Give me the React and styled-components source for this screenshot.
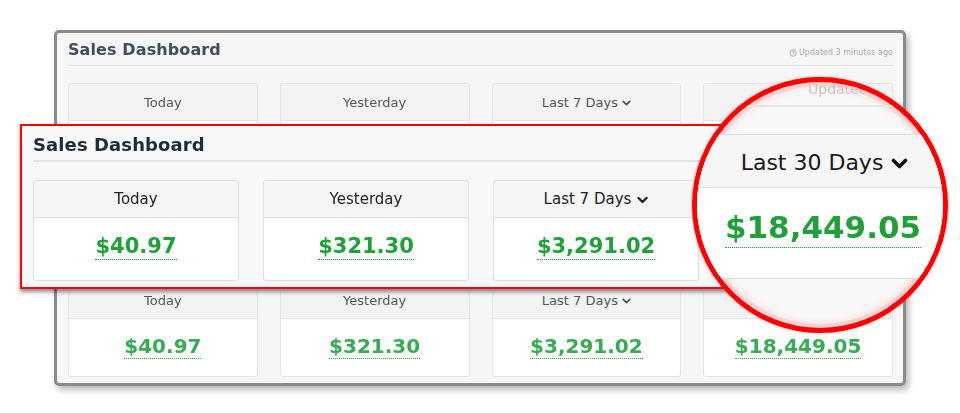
import React from 'react';
import styled, { createGlobalStyle } from 'styled-components';

const GlobalStyle = createGlobalStyle`
  html, body {
    margin: 0;
    padding: 0;
    background: #ffffff;
  }
  body {
    font-family: 'DejaVu Sans', Verdana, sans-serif;
  }
`;

const Stage = styled.div`
  position: relative;
  width: 960px;
  height: 413px;
  overflow: hidden;
  background: #fff;
  padding: 30px 0 0 54px;
  box-sizing: border-box;
`;

/* ---------- background dashboard ---------- */

const Frame = styled.div`
  width: 852px;
  height: 356px;
  box-sizing: border-box;
  border: 3px solid #8b8b8b;
  border-radius: 5px;
  background: #f6f6f6;
  box-shadow: 3px 4px 6px rgba(0, 0, 0, 0.28);
  padding: 7px 10px 7px 11px;
  filter: blur(0.45px);
`;

const TitleRow = styled.div`
  display: flex;
  align-items: center;
  justify-content: space-between;
  padding-bottom: ${p => p.$pb || 5}px;
  border-bottom: ${p => p.$line || 1}px solid #e2e2e2;
`;

const Title = styled.h1`
  margin: 0;
  font-size: ${p => p.$size}px;
  line-height: ${p => p.$lh}px;
  font-weight: bold;
  color: ${p => p.$color};
  letter-spacing: 0.1px;
`;

const Updated = styled.div`
  display: flex;
  align-items: center;
  gap: ${p => p.$gap || 2}px;
  font-size: ${p => p.$size}px;
  line-height: ${p => p.$lh}px;
  color: ${p => p.$color};
  margin-top: ${p => p.$mt || 0}px;
  white-space: nowrap;
`;

const BgGrid = styled.div`
  display: grid;
  grid-template-columns: repeat(4, 1fr);
  column-gap: 22px;
  margin-top: ${p => p.$mt}px;
`;

const BgCard = styled.div`
  border: 1px solid #e4e4e4;
  border-radius: 3px;
  background: #fff;
  overflow: hidden;
`;

const BgHead = styled.div`
  height: 36px;
  display: flex;
  align-items: center;
  justify-content: center;
  gap: 4px;
  background: #f3f3f3;
  border-bottom: 1px solid #e4e4e4;
  font-size: 13px;
  color: #555;
`;

const BgBody = styled.div`
  height: 57px;
  display: flex;
  align-items: center;
  justify-content: center;
`;

const Amount = styled.span`
  display: inline-block;
  font-weight: bold;
  font-size: ${p => p.$size}px;
  line-height: 1;
  color: ${p => p.$color};
  padding-bottom: ${p => p.$pb || 2}px;
  border-bottom: 1px dotted ${p => p.$color};
  margin-top: ${p => p.$mt || 0}px;
`;

/* ---------- zoomed strip ---------- */

const Strip = styled.div`
  position: absolute;
  left: 20px;
  top: 124px;
  width: 740px;
  height: 165px;
  box-sizing: border-box;
  border: 2px solid #ff0000;
  background: #f8f8f8;
  box-shadow: 0 3px 4px rgba(0, 0, 0, 0.45);
  padding: 8px 0 0 11px;
  overflow: hidden;
`;

const StripRow = styled.div`
  display: flex;
  gap: 24px;
  margin-top: 18px;
`;

const StripCard = styled.div`
  flex: 0 0 206px;
  box-sizing: border-box;
  border: 1px solid #e0e0e0;
  border-radius: 3px;
  background: #fff;
  overflow: hidden;
`;

const StripHead = styled.div`
  height: 36px;
  display: flex;
  align-items: center;
  justify-content: center;
  gap: 6px;
  background: #f5f5f5;
  border-bottom: 1px solid #e0e0e0;
  font-size: 15px;
  color: #222;
`;

const StripBody = styled.div`
  height: 62px;
  display: flex;
  align-items: center;
  justify-content: center;
`;

/* ---------- magnifier ---------- */

const Lens = styled.div`
  position: absolute;
  left: 692px;
  top: 77px;
  width: 256px;
  height: 256px;
  box-sizing: border-box;
  border-radius: 50%;
  border: 5px solid #ff0000;
  background: #f8f8f8;
  overflow: hidden;
  box-shadow: 0 0 3px rgba(255, 0, 0, 0.35), inset 0 0 0 4px rgba(255, 120, 120, 0.18),
    inset 0 0 8px 4px rgba(255, 90, 90, 0.18);
`;

const LensUpdated = styled.div`
  padding-left: 106px;
  opacity: 0.9;
`;

const LensLine = styled.div`
  height: 2px;
  background: #e6e6e6;
  margin-top: 10px;
`;

const LensCard = styled.div`
  margin-top: 27px;
  border-top: 1px solid #dcdcdc;
  border-bottom: 1px solid #dcdcdc;
  background: #fff;
`;

const LensHead = styled.div`
  height: 53px;
  display: flex;
  align-items: center;
  justify-content: center;
  gap: 8px;
  padding: 3px 0 0 9px;
  box-sizing: border-box;
  background: #f6f6f6;
  border-bottom: 1px solid #dcdcdc;
  font-size: 22px;
  color: #1a1a1a;
`;

const LensBody = styled.div`
  height: 90px;
  display: flex;
  align-items: center;
  justify-content: center;
  padding-left: 6px;
`;

const Chevron = ({ w, h, sw, color }) => (
  <svg width={w} height={h} viewBox="0 0 12 8" fill="none" style={{ marginTop: 2 }}>
    <polyline points="1.6,1.8 6,6.2 10.4,1.8" stroke={color} strokeWidth={sw} strokeLinecap="round" strokeLinejoin="round" />
  </svg>
);

const Clock = ({ size, color }) => (
  <svg width={size} height={size} viewBox="0 0 12 12" fill="none">
    <circle cx="6" cy="6" r="4.8" stroke={color} strokeWidth="1.4" />
    <path d="M6 3.3V6.2H8" stroke={color} strokeWidth="1.3" strokeLinecap="round" />
  </svg>
);

const periods = [
  { label: 'Today', value: '$40.97' },
  { label: 'Yesterday', value: '$321.30' },
  { label: 'Last 7 Days', value: '$3,291.02', menu: true },
  { label: 'Last 30 Days', value: '$18,449.05', menu: true },
];

const bgGreen = '#36ad52';
const green = '#1fa039';

const App = () => {
  return (
    <Stage>
      <GlobalStyle />

      <Frame>
        <TitleRow>
          <Title $size={16} $lh={20} $color="#3f4d5e">Sales Dashboard</Title>
          <Updated $size={8} $lh={10} $color="#a8a8a8" $mt={6}>
            <Clock size={8} color="#a8a8a8" /> Updated 3 minutes ago
          </Updated>
        </TitleRow>
        <BgGrid $mt={17}>
          {periods.map(p => (
            <BgCard key={p.label}>
              <BgHead>
                {p.label}
                {p.menu && <Chevron w={9} h={6} sw={2.4} color="#555" />}
              </BgHead>
              <BgBody>
                <Amount $size={20} $color={bgGreen}>{p.value}</Amount>
              </BgBody>
            </BgCard>
          ))}
        </BgGrid>
        <BgGrid $mt={102}>
          {periods.map(p => (
            <BgCard key={p.label}>
              <BgHead>
                {p.label}
                {p.menu && <Chevron w={9} h={6} sw={2.4} color="#555" />}
              </BgHead>
              <BgBody>
                <Amount $size={20} $color={bgGreen}>{p.value}</Amount>
              </BgBody>
            </BgCard>
          ))}
        </BgGrid>
      </Frame>

      <Strip>
        <TitleRow $pb={4} $line={2}>
          <Title $size={18} $lh={22} $color="#1d2b3a">Sales Dashboard</Title>
        </TitleRow>
        <StripRow>
          {periods.map(p => (
            <StripCard key={p.label}>
              <StripHead>
                {p.label}
                {p.menu && <Chevron w={11} h={8} sw={2.6} color="#222" />}
              </StripHead>
              <StripBody>
                <Amount $size={21} $color={green} $mt={-3}>{p.value}</Amount>
              </StripBody>
            </StripCard>
          ))}
        </StripRow>
      </Strip>

      <Lens>
        <LensUpdated>
          <Updated $size={14} $lh={12} $color="#c2c2c2" $gap={5}>
            <Clock size={13} color="#c2c2c2" /> Updated 3 minutes ago
          </Updated>
        </LensUpdated>
        <LensLine />
        <LensCard>
          <LensHead>
            Last 30 Days
            <Chevron w={17} h={11} sw={2.6} color="#111" />
          </LensHead>
          <LensBody>
            <Amount $size={31} $color={green} $pb={4} $mt={-6}>$18,449.05</Amount>
          </LensBody>
        </LensCard>
      </Lens>
    </Stage>
  );
};

export default App;
